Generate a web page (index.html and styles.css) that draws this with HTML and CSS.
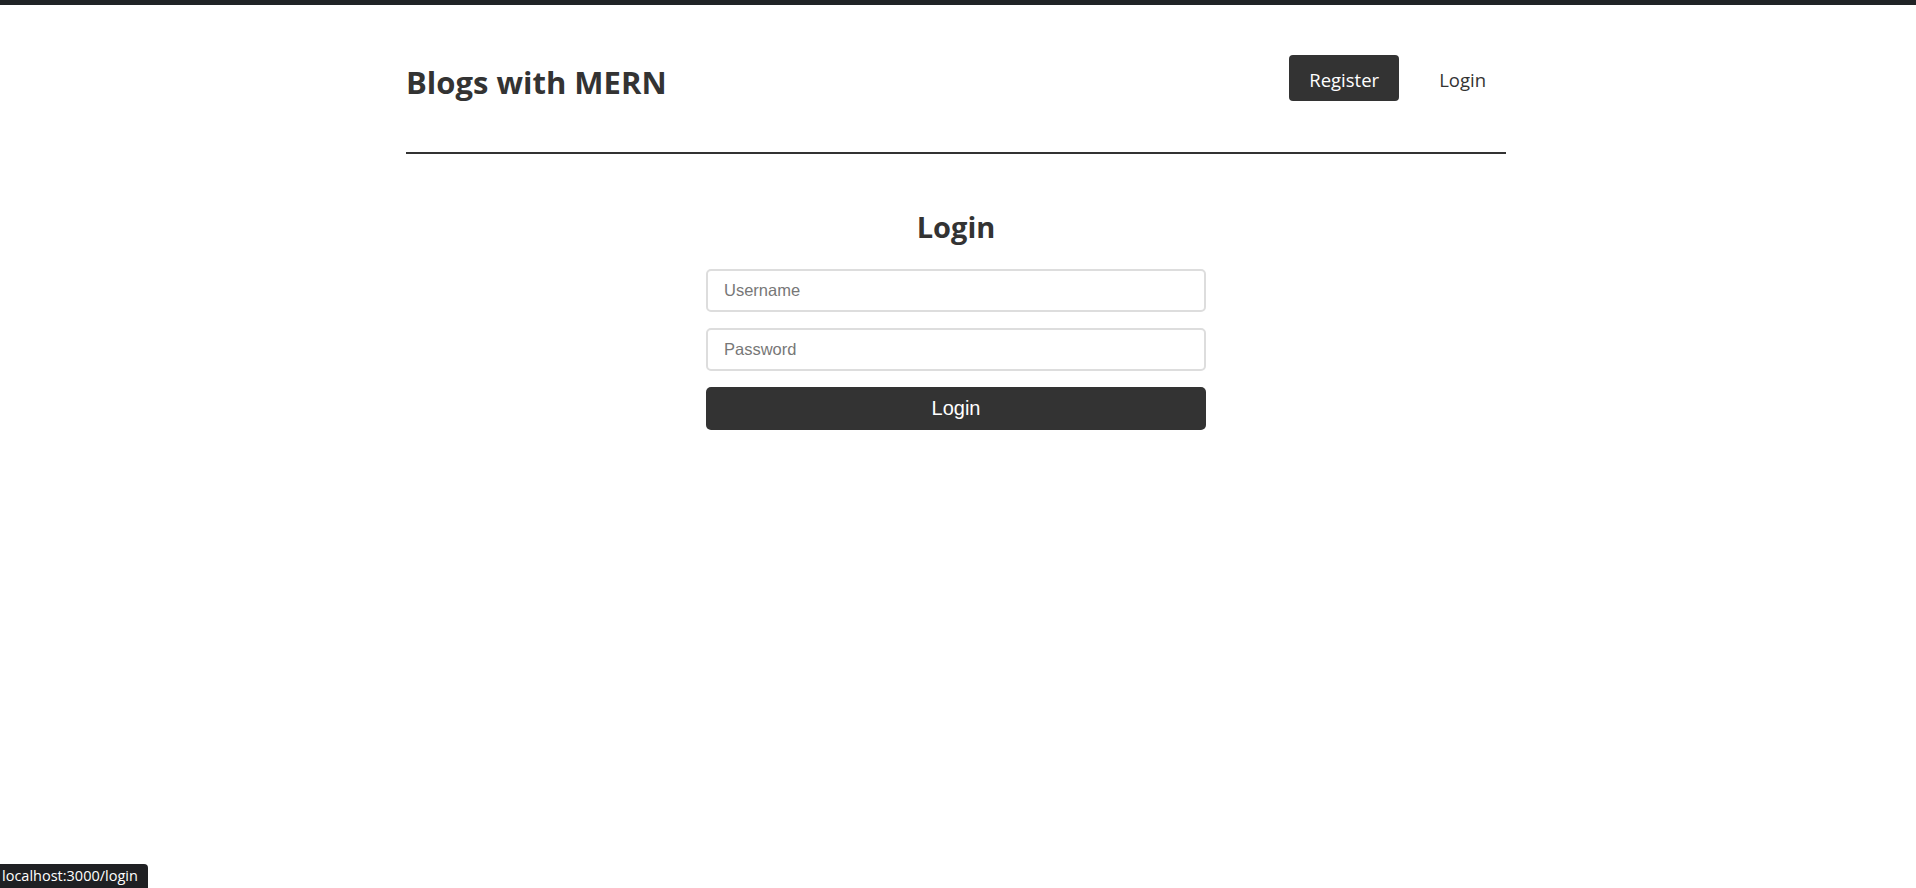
FILE: index.html
```html
<!DOCTYPE html>
<html lang="en">
<head>
<meta charset="utf-8">
<title>Blogs with MERN</title>
<link rel="stylesheet" href="styles.css">
</head>
<body>
<div class="topbar"></div>
<div class="container">
  <header class="header">
    <a class="logo" href="#">Blogs with MERN</a>
    <nav class="nav">
      <a class="nav-link nav-link--active" href="#">Register</a>
      <a class="nav-link" href="#">Login</a>
    </nav>
  </header>
  <main class="main">
    <h1 class="page-title">Login</h1>
    <form class="login-form">
      <input class="field" type="text" placeholder="Username">
      <input class="field" type="password" placeholder="Password">
      <button class="submit" type="button">Login</button>
    </form>
  </main>
</div>
<div class="status-bubble">localhost:3000/login</div>
</body>
</html>
```

FILE: styles.css
```css
* { box-sizing: border-box; }

html, body {
  margin: 0;
  padding: 0;
  background: #ffffff;
}

body {
  font-family: "Open Sans", "Noto Sans", sans-serif;
  color: #333333;
}

.topbar {
  height: 5px;
  background: #202326;
}

.container {
  width: 1100px;
  margin: 0 auto;
  position: relative;
  left: -2px;
}

.header {
  display: flex;
  justify-content: space-between;
  align-items: center;
  padding: 50px 0 51px;
  border-bottom: 2px solid #333333;
}

.logo {
  display: block;
  height: 46px;
  padding-top: 4px;
  font-size: 31px;
  font-weight: 700;
  line-height: 46px;
  color: #333333;
  text-decoration: none;
}

.nav {
  display: flex;
  align-items: center;
  gap: 20px;
}

.nav-link {
  display: block;
  padding: 3px 20px 0;
  height: 46px;
  line-height: 43px;
  font-size: 18.5px;
  color: #333333;
  text-decoration: none;
  border-radius: 4px;
}

.nav-link--active {
  background: #333333;
  color: #ffffff;
}

.main {
  padding-top: 53px;
}

.page-title {
  margin: 0;
  text-align: center;
  font-size: 29px;
  font-weight: 700;
  line-height: 40px;
  color: #333333;
}

.login-form {
  width: 500px;
  margin: 22px auto 0;
  display: flex;
  flex-direction: column;
  gap: 16px;
}

.field {
  height: 43px;
  padding: 0 16px;
  border: 2px solid #dddddd;
  border-radius: 5px;
  font-family: "Liberation Sans", Arial, sans-serif;
  font-size: 16.5px;
  color: #333333;
  background: #ffffff;
  outline: none;
}

.field::placeholder {
  color: #777777;
}

.submit {
  height: 43px;
  border: none;
  border-radius: 5px;
  background: #333333;
  color: #ffffff;
  font-family: "Liberation Sans", Arial, sans-serif;
  font-size: 20px;
  cursor: pointer;
}

.status-bubble {
  position: fixed;
  left: 0;
  bottom: 0;
  height: 24px;
  padding: 0 10px 0 2px;
  line-height: 24px;
  background: #1f2023;
  color: #ffffff;
  font-size: 14.5px;
  border-top-right-radius: 4px;
}
```
